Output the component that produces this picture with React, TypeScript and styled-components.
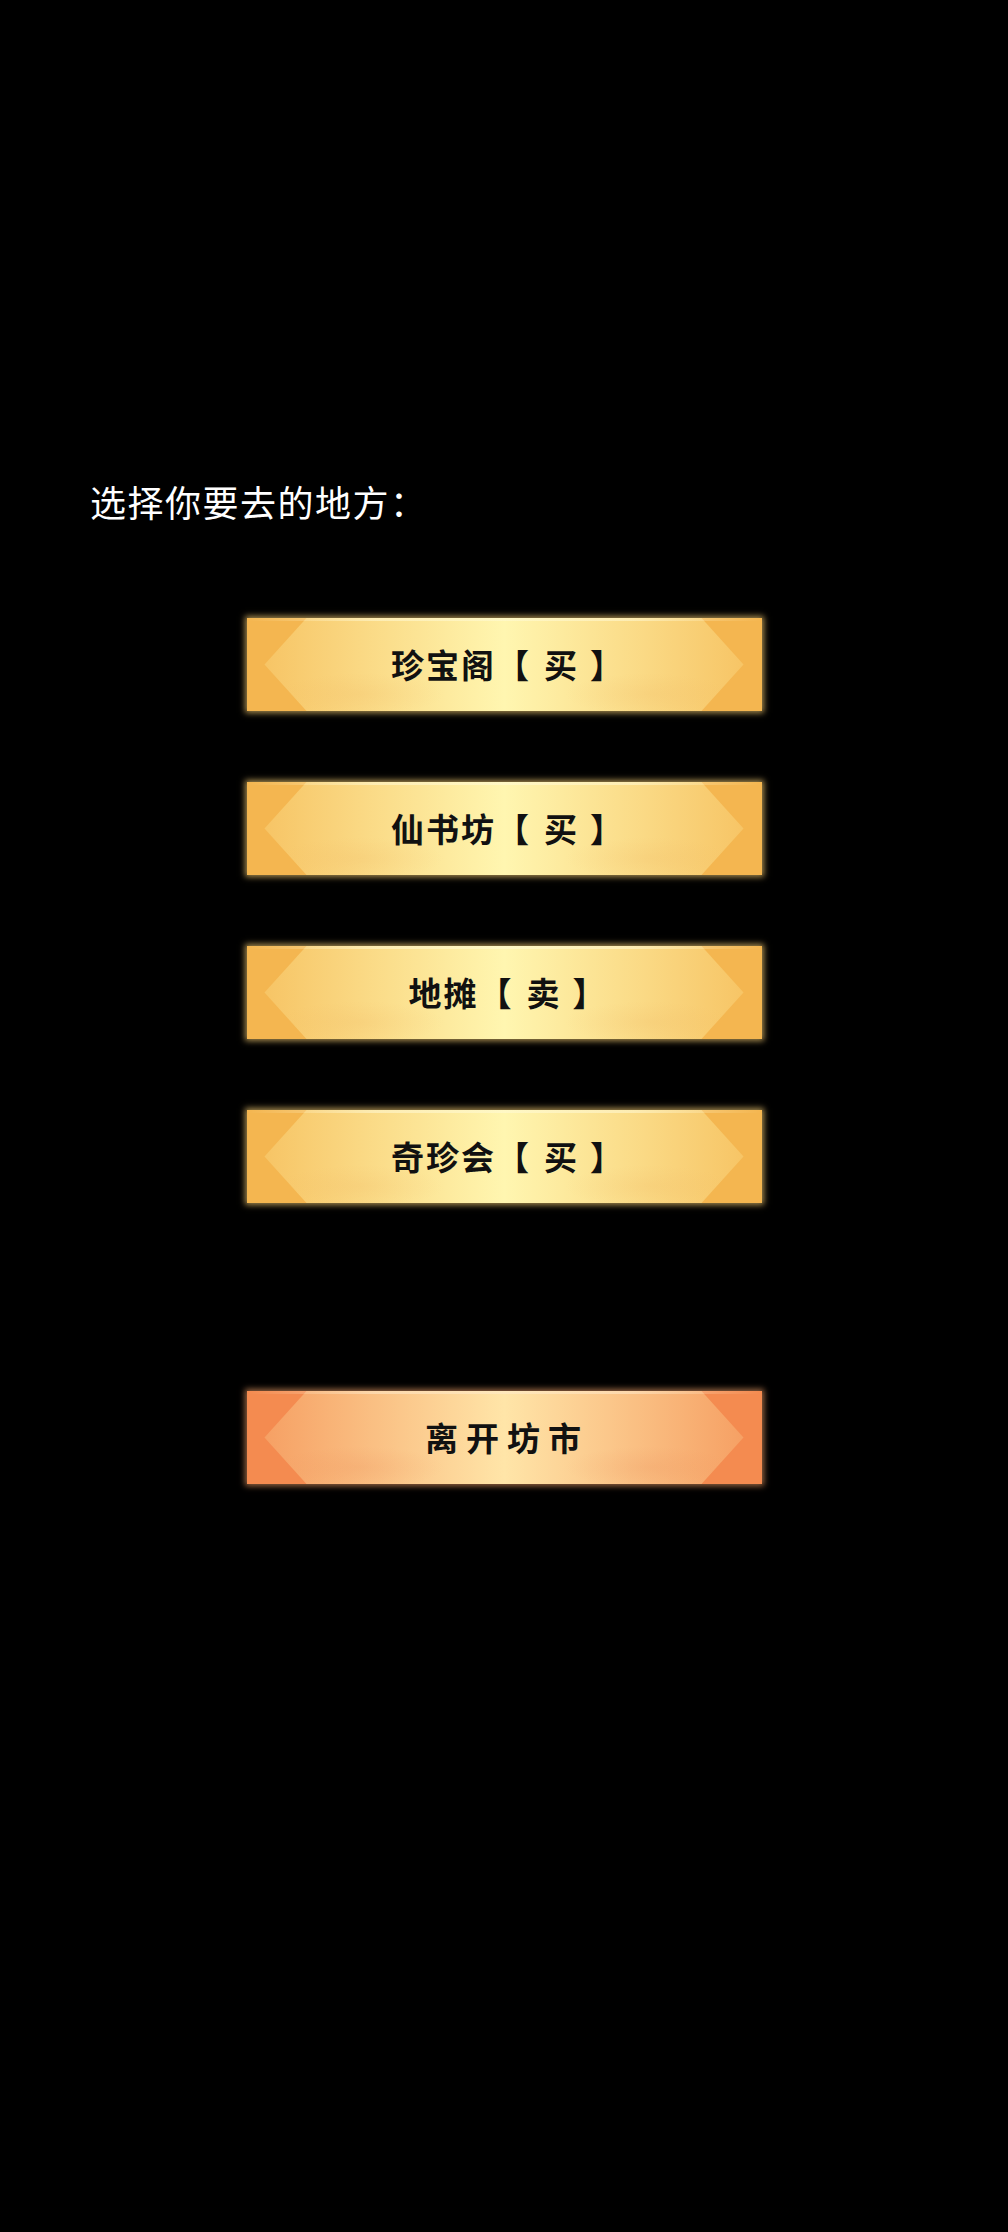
import styled, { createGlobalStyle, css } from "styled-components";

const GlobalStyle = createGlobalStyle`
  html, body {
    margin: 0;
    padding: 0;
    background: #000;
  }
  body {
    font-family: "Noto Sans CJK SC", "Noto Sans", sans-serif;
  }
`;

const Screen = styled.div`
  width: 1008px;
  min-height: 2232px;
  background: #000;
  padding-top: 480px;
  box-sizing: border-box;
`;

const Prompt = styled.div`
  padding-left: 90px;
  color: #fff;
  font-size: 36px;
  line-height: 42px;
  letter-spacing: 1.5px;
  font-weight: 400;
`;

const Menu = styled.div`
  margin-top: 96px;
  display: flex;
  flex-direction: column;
  align-items: center;
  gap: 71px;
`;

const ExitWrap = styled.div`
  margin-top: 188px;
  display: flex;
  justify-content: center;
`;

type Tone = "gold" | "red";

const palette = {
  gold: {
    edge: "#f4b650",
    mid: "#f6c160",
    center: "#fff6b0",
    glow: "rgba(255, 214, 120, 0.65)",
    line: "rgba(255, 250, 215, 0.9)",
    swirl: "rgba(236, 175, 90, 0.16)",
  },
  red: {
    edge: "#f48b50",
    mid: "#f59b5f",
    center: "#ffe5a8",
    glow: "rgba(255, 170, 110, 0.6)",
    line: "rgba(255, 235, 205, 0.9)",
    swirl: "rgba(230, 130, 80, 0.16)",
  },
};

const Plate = styled.button<{ $tone: Tone }>`
  position: relative;
  width: 515px;
  height: 93px;
  border: none;
  padding: 0;
  cursor: pointer;
  overflow: hidden;
  font-family: "Noto Sans CJK SC", "Noto Sans", sans-serif;
  font-size: 33px;
  font-weight: 700;
  color: #111;
  display: flex;
  align-items: center;
  justify-content: center;
  ${({ $tone }) => {
    const p = palette[$tone];
    return css`
      background: ${p.edge};
      box-shadow: 0 0 6px 2px ${p.glow};

      &::before {
        content: "";
        position: absolute;
        inset: 0;
        clip-path: polygon(
          60px 0,
          calc(100% - 60px) 0,
          calc(100% - 18px) 50%,
          calc(100% - 60px) 100%,
          60px 100%,
          18px 50%
        );
        background:
          radial-gradient(ellipse 120px 30px at 22% 82%, ${p.swirl}, transparent 70%),
          radial-gradient(ellipse 120px 30px at 78% 82%, ${p.swirl}, transparent 70%),
          linear-gradient(90deg, ${p.mid} 0%, ${p.center} 50%, ${p.mid} 100%);
      }

      &::after {
        content: "";
        position: absolute;
        left: 0;
        right: 0;
        top: 0;
        height: 3px;
        background: linear-gradient(90deg, transparent, ${p.line} 25%, ${p.line} 75%, transparent);
        opacity: 0.6;
      }
    `;
  }}
`;

const Label = styled.span<{ $spacing: number; $nudge: number }>`
  position: relative;
  z-index: 1;
  padding-left: ${({ $nudge }) => $nudge}px;
  letter-spacing: ${({ $spacing }) => $spacing}px;
  line-height: 1;
  white-space: nowrap;
`;

const Deal = styled.span`
  margin-left: 13px;
  margin-right: 11px;
`;

const places = [
  { name: "珍宝阁", deal: "买" },
  { name: "仙书坊", deal: "买" },
  { name: "地摊", deal: "卖" },
  { name: "奇珍会", deal: "买" },
];

export default function App() {
  return (
    <Screen>
      <GlobalStyle />
      <Prompt>选择你要去的地方：</Prompt>
      <Menu>
        {places.map((p) => (
          <Plate key={p.name} $tone="gold">
            <Label $spacing={2} $nudge={8}>
              {p.name}【<Deal>{p.deal}</Deal>】
            </Label>
          </Plate>
        ))}
      </Menu>
      <ExitWrap>
        <Plate $tone="red">
          <Label $spacing={8} $nudge={6}>离开坊市</Label>
        </Plate>
      </ExitWrap>
    </Screen>
  );
}
